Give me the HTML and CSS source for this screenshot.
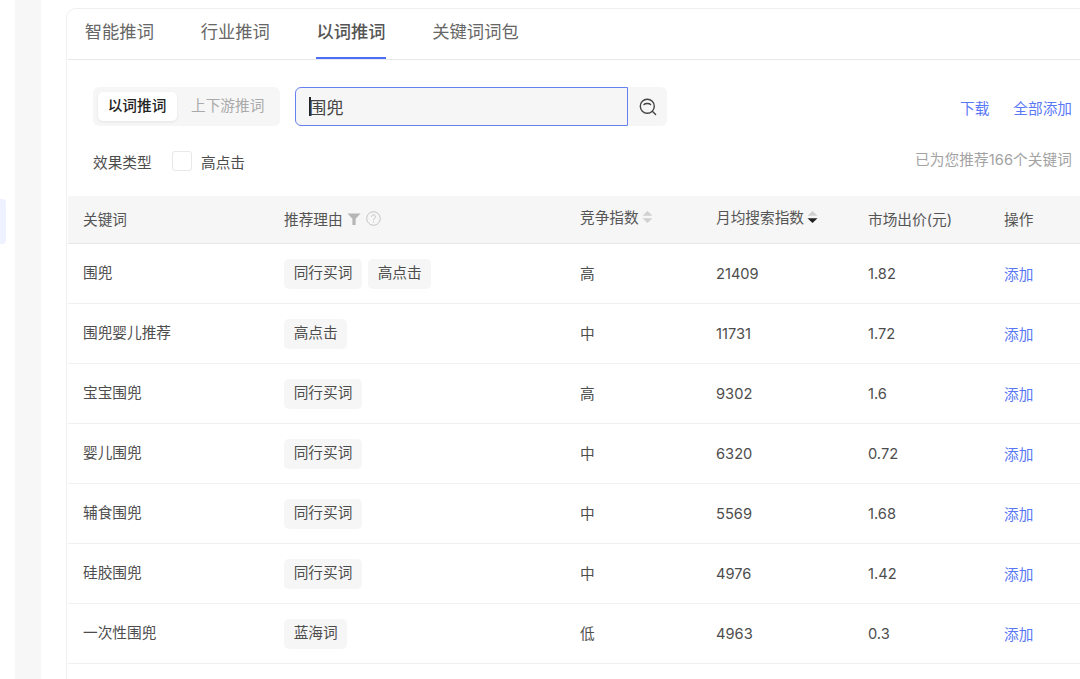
FILE: index.html
```html
<!DOCTYPE html>
<html lang="zh">
<head>
<meta charset="utf-8">
<title>以词推词</title>
<link rel="stylesheet" href="styles.css">
</head>
<body>
<div class="page">
  <aside class="sidebar"><div class="side-active"></div></aside>
  <div class="gutter"></div>
  <main class="main">
    <section class="card">
      <nav class="tabs">
        <span class="tab">智能推词</span>
        <span class="tab">行业推词</span>
        <span class="tab tab-on">以词推词</span>
        <span class="tab">关键词词包</span>
      </nav>
      <div class="toolbar">
        <div class="segment">
          <span class="seg seg-on">以词推词</span>
          <span class="seg">上下游推词</span>
        </div>
        <div class="search">
          <div class="search-input"><span class="caret"></span>围兜</div>
          <div class="search-btn">
            <svg width="20" height="20" viewBox="0 0 20 20" fill="none" stroke="#444" stroke-width="1.4" stroke-linecap="round"><circle cx="9.3" cy="9.3" r="7"/><path d="M6 7.6c.9-1.4 5.7-1.4 6.6 0"/><path d="M14.6 14.6l3 3"/></svg>
          </div>
        </div>
        <div class="actions">
          <a class="link">下载</a>
          <a class="link">全部添加</a>
        </div>
      </div>
      <div class="filter">
        <span class="filter-label">效果类型</span>
        <span class="checkbox"></span>
        <span class="filter-opt">高点击</span>
        <span class="count">已为您推荐166个关键词</span>
      </div>
      <div class="table">
        <div class="row head">
          <div class="cell">关键词</div>
          <div class="cell">推荐理由
            <svg class="ic-filter" width="14" height="12" viewBox="0 0 14 12"><path d="M0.5 0.5h13L8.6 5.8V12H5.4V5.8z" fill="#b5b5b5"/></svg>
            <svg class="ic-help" width="15" height="15" viewBox="0 0 15 15" fill="none" stroke="#c4c4c4"><circle cx="7.5" cy="7.5" r="6.8"/><path d="M5.5 5.8c0-2.6 4-2.6 4 0 0 1.5-2 1.5-2 3.2"/><path d="M7.5 10.3v1.1"/></svg>
          </div>
          <div class="cell up">竞争指数
            <svg class="ic-sort" width="11" height="14" viewBox="0 0 11 14"><path d="M5.5 1l5 4.8H.5z" fill="#d0d0d0"/><path d="M5.5 13L.5 8.200h10z" fill="#d0d0d0"/></svg>
          </div>
          <div class="cell up">月均搜索指数
            <svg class="ic-sort" width="11" height="14" viewBox="0 0 11 14"><path d="M5.5 1l5 4.8H.5z" fill="#d0d0d0"/><path d="M5.5 13L.5 8.200h10z" fill="#222"/></svg>
          </div>
          <div class="cell">市场出价(元)</div>
          <div class="cell">操作</div>
        </div>
        <div class="row">
          <div class="cell up">围兜</div>
          <div class="cell tags"><span class="tag">同行买词</span><span class="tag">高点击</span></div>
          <div class="cell up-s">高</div><div class="cell">21409</div><div class="cell">1.82</div><div class="cell"><a class="link">添加</a></div>
        </div>
        <div class="row">
          <div class="cell up">围兜婴儿推荐</div>
          <div class="cell tags"><span class="tag">高点击</span></div>
          <div class="cell up-s">中</div><div class="cell">11731</div><div class="cell">1.72</div><div class="cell"><a class="link">添加</a></div>
        </div>
        <div class="row">
          <div class="cell up">宝宝围兜</div>
          <div class="cell tags"><span class="tag">同行买词</span></div>
          <div class="cell up-s">高</div><div class="cell">9302</div><div class="cell">1.6</div><div class="cell"><a class="link">添加</a></div>
        </div>
        <div class="row">
          <div class="cell up">婴儿围兜</div>
          <div class="cell tags"><span class="tag">同行买词</span></div>
          <div class="cell up-s">中</div><div class="cell">6320</div><div class="cell">0.72</div><div class="cell"><a class="link">添加</a></div>
        </div>
        <div class="row">
          <div class="cell up">辅食围兜</div>
          <div class="cell tags"><span class="tag">同行买词</span></div>
          <div class="cell up-s">中</div><div class="cell">5569</div><div class="cell">1.68</div><div class="cell"><a class="link">添加</a></div>
        </div>
        <div class="row">
          <div class="cell up">硅胶围兜</div>
          <div class="cell tags"><span class="tag">同行买词</span></div>
          <div class="cell up-s">中</div><div class="cell">4976</div><div class="cell">1.42</div><div class="cell"><a class="link">添加</a></div>
        </div>
        <div class="row">
          <div class="cell up">一次性围兜</div>
          <div class="cell tags"><span class="tag">蓝海词</span></div>
          <div class="cell up-s">低</div><div class="cell">4963</div><div class="cell">0.3</div><div class="cell"><a class="link">添加</a></div>
        </div>
      </div>
    </section>
  </main>
</div>
</body>
</html>
```
FILE: styles.css
```css
* { box-sizing: border-box; }
html, body { margin: 0; padding: 0; height: 100%; background: #fff; overflow: hidden; }
body {
  font-family: Inter, "Noto Sans CJK SC", sans-serif;
  font-size: 14.67px;
  color: #4d4d4d;
}
.page { display: flex; width: 1080px; height: 679px; overflow: hidden; }
.sidebar { width: 15px; flex: none; padding-top: 199px; }
.side-active { width: 6px; height: 45px; background: #eef1ff; border-radius: 0 4px 4px 0; }
.gutter { width: 26px; flex: none; background: #f7f7f7; }
.main { flex: 1; min-width: 0; padding: 8px 0 0 25px; }
.card {
  width: 1040px;
  height: 700px;
  border: 1px solid #f0f0f0;
  border-radius: 10px 0 0 0;
  padding-left: 1px;
}
.tabs {
  display: flex;
  gap: 46.7px;
  height: 51px;
  padding-left: 16.8px;
  border-bottom: 1px solid #e8e8e8;
}
.tab {
  font-size: 17.3px;
  line-height: 46px;
  height: 50px;
  color: #666;
}
.tab-on { color: #555; border-bottom: 2.5px solid #4f6ef7; font-weight: 500; }
.toolbar {
  display: flex;
  align-items: center;
  height: 39px;
  margin-top: 27px;
  padding-left: 25px;
}
.segment {
  display: flex;
  align-items: center;
  width: 187px;
  height: 39px;
  padding: 5px;
  gap: 14px;
  background: #f6f6f6;
  border-radius: 6px;
}
.seg { color: #aaa; line-height: 29px; }
.seg-on {
  width: 79px;
  padding-right: 1px;
  text-align: center;
  background: #fff;
  color: #222;
  font-weight: 500;
  border-radius: 5px;
  box-shadow: 0 1px 3px rgba(0,0,0,.08);
}
.search { display: flex; margin-left: 15px; height: 39px; }
.search-input {
  display: flex;
  align-items: center;
  width: 333px;
  padding-left: 13px;
  font-size: 17.3px;
  color: #444;
  background: #f6f6f6;
  border: 1px solid #6680ee;
  border-radius: 6px 0 0 6px;
}
.caret { width: 1.5px; height: 19px; background: #222; margin-right: -1.5px; }
.search-btn {
  display: flex;
  align-items: center;
  justify-content: center;
  width: 39px;
  background: #f6f6f6;
  border-radius: 0 6px 6px 0;
}
.actions { display: flex; gap: 24px; margin-left: auto; margin-right: 33px; padding-top: 2px; }
.link { color: #5a78f5; }
.filter {
  display: flex;
  align-items: center;
  height: 24px;
  margin-top: 23px;
  padding-left: 25px;
  padding-right: 33px;
}
.filter-label { color: #4d4d4d; }
.checkbox {
  width: 20px;
  height: 20px;
  margin-left: 20px;
  background: #fff;
  border: 1px solid #e8e8e8;
  border-radius: 3px;
}
.filter-opt { margin-left: 9.4px; }
.count { margin-left: auto; color: #a3a3a3; padding-bottom: 6px; letter-spacing: .08px; }
.table { margin-top: 23px; }
.row {
  display: grid;
  grid-template-columns: 201px 296px 136px 152px 136px 1fr;
  align-items: center;
  height: 60px;
  padding-left: 15px;
  border-bottom: 1px solid #f0f0f0;
}
.row.head {
  height: 48px;
  padding-bottom: 2px;
  background: #f6f6f6;
  border-bottom-color: #e8e8e8;
  color: #555;
}
.cell { display: flex; align-items: center; white-space: nowrap; }
.up { position: relative; top: -2px; }
.up-s { position: relative; top: -1px; }
.tags { gap: 6px; }
.tag {
  height: 30px;
  line-height: 29px;
  padding: 0 9.7px;
  background: #f6f6f6;
  border-radius: 5px;
}
.ic-filter { margin-left: 4px; }
.ic-help { margin-left: 5px; }
.ic-sort { margin-left: 3px; }
```
